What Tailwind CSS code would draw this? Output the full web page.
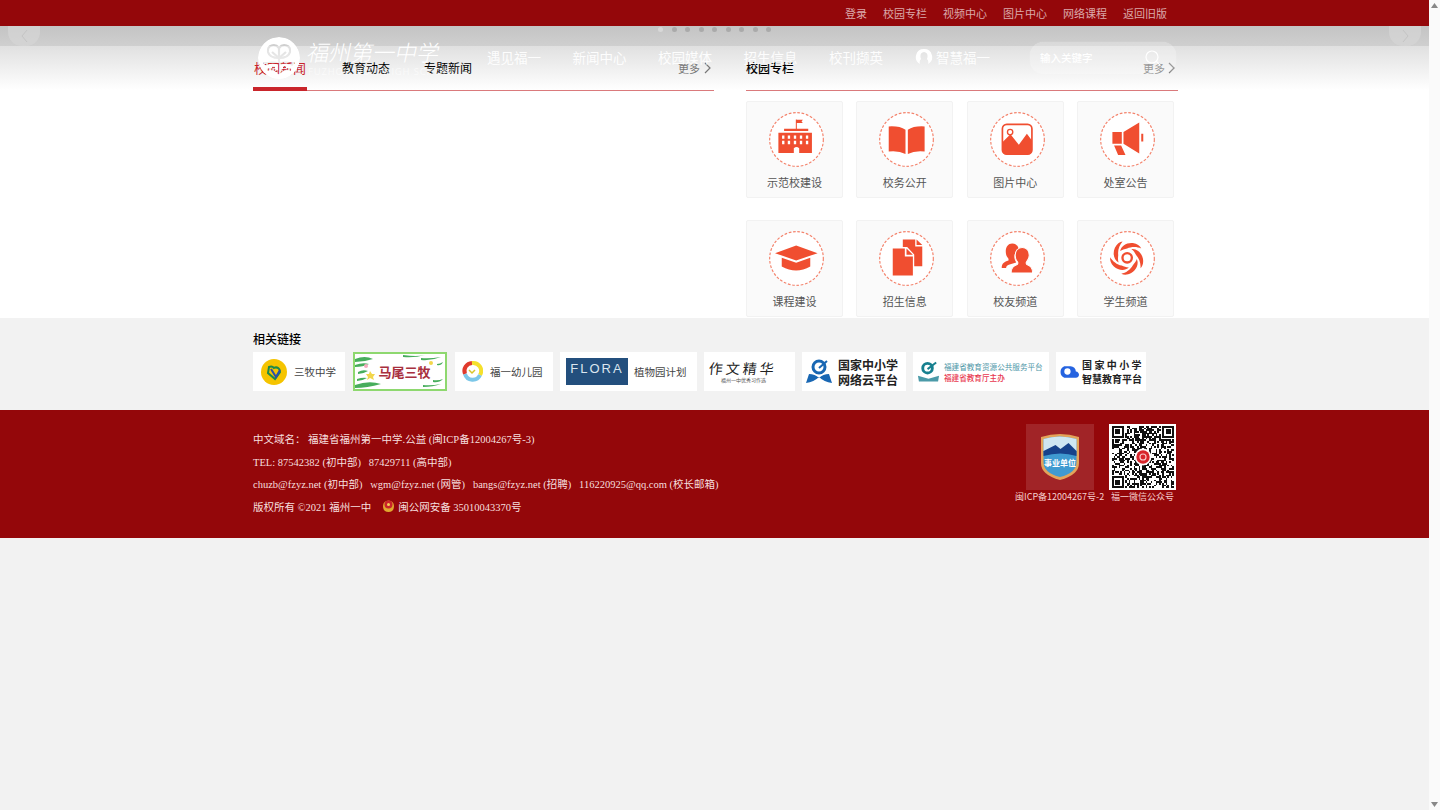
<!DOCTYPE html>
<html lang="zh-CN">
<head>
<meta charset="utf-8">
<title>福州第一中学</title>
<script src="https://cdn.jsdelivr.net/npm/@tailwindcss/browser@4"></script>
</head>
<body class="bg-[#f2f2f2] font-['Noto_Sans_CJK_SC','Liberation_Sans',sans-serif] overflow-hidden">
<div class="flex h-[810px] w-[1440px] overflow-hidden">
<div class="relative w-[1429px] shrink-0">

  <!-- top bar -->
  <div class="h-[26px] bg-[#94070a] flex items-center justify-end gap-[16px] pr-[262px] text-[11px] text-[#dba9aa]">
    <a>登录</a><a>校园专栏</a><a>视频中心</a><a>图片中心</a><a>网络课程</a><a>返回旧版</a>
  </div>

  <!-- main -->
  <div class="h-[292px] bg-[linear-gradient(#c4c4c4_0,#cfcfcf_20px,#e0e0e0_20px,#ffffff_64px)] flex pl-[253px]">
    <div class="w-[461px] h-[65px] flex border-b border-[#da7a7c]">
      <a class="w-[54px] h-[65px] pt-[33px] text-[13px] leading-[18px] text-[#c9252b] border-b-[4px] border-[#c9252b] text-center">校园新闻</a>
      <a class="ml-[35px] pt-[33px] text-[12px] leading-[18px] text-black">教育动态</a>
      <a class="ml-[34px] pt-[33px] text-[12px] leading-[18px] text-black">专题新闻</a>
      <a class="ml-auto mr-[3px] pt-[33px] text-[11px] leading-[18px] text-[#777] flex items-start gap-[4px]">更多
        <svg class="mt-[3px]" width="7" height="12" viewBox="0 0 7 12" fill="none" stroke="#777" stroke-width="1.2"><path d="M1 1l5 5-5 5"/></svg>
      </a>
    </div>
    <div class="ml-[32px] w-[432px]">
      <div class="h-[65px] flex border-b border-[#da7a7c]">
        <a class="pt-[33px] text-[12px] leading-[18px] font-medium text-black">校园专栏</a>
        <a class="ml-auto mr-[3px] pt-[33px] text-[11px] leading-[18px] text-[#777] flex items-start gap-[3px]">更多
          <svg class="mt-[3px]" width="7" height="12" viewBox="0 0 7 12" fill="none" stroke="#777" stroke-width="1.2"><path d="M1 1l5 5-5 5"/></svg>
        </a>
      </div>
      <div class="mt-[10px] grid grid-cols-[97px_97px_97px_97px] gap-x-[13.33px] gap-y-[22px]">
        <!-- card 1 -->
        <a class="h-[97px] bg-[#fafafa] border border-[#f2f2f2] rounded-[2px] flex flex-col items-center">
          <svg class="mt-[10px] ml-[4px] shrink-0" width="55" height="55" viewBox="0 0 164 164">
            <circle cx="82" cy="82" r="80" fill="#fff" stroke="#f4836c" stroke-width="3.5" stroke-dasharray="8 5"/>
            <path fill="#f04e30" d="M80 22h3v1h18l-4 5 4 5H83v17h34v7H45v-7h35zM28 62h100v60H90V108q-8-8-16 0v14H28z"/>
            <path fill="#fff" d="M39 70h7v10h-7zM56 70h7v10h-7zM74 70h7v10h-7zM92 70h7v10h-7zM110 70h7v10h-7zM39 86h7v10h-7zM56 86h7v10h-7zM74 86h7v10h-7zM92 86h7v10h-7zM110 86h7v10h-7z"/>
          </svg>
          <span class="mt-[7px] text-[11px] leading-[16px] text-[#555]">示范校建设</span>
        </a>
        <!-- card 2 -->
        <a class="h-[97px] bg-[#fafafa] border border-[#f2f2f2] rounded-[2px] flex flex-col items-center">
          <svg class="mt-[10px] ml-[4px] shrink-0" width="55" height="55" viewBox="0 0 164 164">
            <circle cx="82" cy="82" r="80" fill="#fff" stroke="#f4836c" stroke-width="3.5" stroke-dasharray="8 5"/>
            <path fill="#f04e30" d="M29 43q32-2 50 10v72q-20-10-50-7zM136 43q-32-2-50 10v72q20-10 50-7z"/>
          </svg>
          <span class="mt-[7px] text-[11px] leading-[16px] text-[#555]">校务公开</span>
        </a>
        <!-- card 3 -->
        <a class="h-[97px] bg-[#fafafa] border border-[#f2f2f2] rounded-[2px] flex flex-col items-center">
          <svg class="mt-[10px] ml-[4px] shrink-0" width="55" height="55" viewBox="0 0 164 164">
            <circle cx="82" cy="82" r="80" fill="#fff" stroke="#f4836c" stroke-width="3.5" stroke-dasharray="8 5"/>
            <rect x="37" y="37" width="88" height="89" rx="13" fill="#fff" stroke="#f04e30" stroke-width="5"/>
            <path fill="#f04e30" d="M37 90l24-24 25 32 24-33 15 20v30q0 11-11 11H48q-11 0-11-11z"/>
            <circle cx="60" cy="60" r="8" fill="none" stroke="#f04e30" stroke-width="4"/>
          </svg>
          <span class="mt-[7px] text-[11px] leading-[16px] text-[#555]">图片中心</span>
        </a>
        <!-- card 4 -->
        <a class="h-[97px] bg-[#fafafa] border border-[#f2f2f2] rounded-[2px] flex flex-col items-center">
          <svg class="mt-[10px] ml-[4px] shrink-0" width="55" height="55" viewBox="0 0 164 164">
            <circle cx="82" cy="82" r="80" fill="#fff" stroke="#f4836c" stroke-width="3.5" stroke-dasharray="8 5"/>
            <path fill="#f04e30" d="M37 60h28v35H37zM70 60l47-29v93L70 95zM123 65h6v23h-6zM42 100h21l13 28H54z"/>
          </svg>
          <span class="mt-[7px] text-[11px] leading-[16px] text-[#555]">处室公告</span>
        </a>
        <!-- card 5 -->
        <a class="h-[97px] bg-[#fafafa] border border-[#f2f2f2] rounded-[2px] flex flex-col items-center">
          <svg class="mt-[10px] ml-[4px] shrink-0" width="55" height="55" viewBox="0 0 164 164">
            <circle cx="82" cy="82" r="80" fill="#fff" stroke="#f4836c" stroke-width="3.5" stroke-dasharray="8 5"/>
            <path fill="#f04e30" d="M18 66l63-23 64 23-64 22zM38 80l43 15 42-15v26q-42 24-85 0z"/>
          </svg>
          <span class="mt-[7px] text-[11px] leading-[16px] text-[#555]">课程建设</span>
        </a>
        <!-- card 6 -->
        <a class="h-[97px] bg-[#fafafa] border border-[#f2f2f2] rounded-[2px] flex flex-col items-center">
          <svg class="mt-[10px] ml-[4px] shrink-0" width="55" height="55" viewBox="0 0 164 164">
            <circle cx="82" cy="82" r="80" fill="#fff" stroke="#f4836c" stroke-width="3.5" stroke-dasharray="8 5"/>
            <path fill="#f04e30" d="M71 25h37v21h21v59h-24V70L84 48H71zM112 25l17 17h-17z"/>
            <path fill="#f04e30" d="M41 52h36v24h24v57H41zM82 52l19 19H82z"/>
          </svg>
          <span class="mt-[7px] text-[11px] leading-[16px] text-[#555]">招生信息</span>
        </a>
        <!-- card 7 -->
        <a class="h-[97px] bg-[#fafafa] border border-[#f2f2f2] rounded-[2px] flex flex-col items-center">
          <svg class="mt-[10px] ml-[4px] shrink-0" width="55" height="55" viewBox="0 0 164 164">
            <circle cx="82" cy="82" r="80" fill="#fff" stroke="#f4836c" stroke-width="3.5" stroke-dasharray="8 5"/>
            <path fill="#f04e30" d="M66 37c14 0 20 11 19 20-8 4-14 13-12 24 1 7 5 10 5 13-12 4-30 6-30 16H35c0-14 8-18 20-22 1-3 0-6-2-8-5-6-6-12-6-20 0-13 8-23 19-23z"/>
            <path fill="#f04e30" stroke="#fff" stroke-width="3" d="M96 49c14 0 21 11 21 23 0 9-3 14-8 20-2 3-1 6 1 8 10 4 17 8 17 25H63c0-17 8-21 18-25 2-2 3-5 1-8-5-6-7-11-7-20 0-12 8-23 21-23z"/>
          </svg>
          <span class="mt-[7px] text-[11px] leading-[16px] text-[#555]">校友频道</span>
        </a>
        <!-- card 8 -->
        <a class="h-[97px] bg-[#fafafa] border border-[#f2f2f2] rounded-[2px] flex flex-col items-center">
          <svg class="mt-[10px] ml-[4px] shrink-0" width="55" height="55" viewBox="0 0 164 164">
            <circle cx="82" cy="82" r="80" fill="#fff" stroke="#f4836c" stroke-width="3.5" stroke-dasharray="8 5"/>
            <circle cx="81" cy="80" r="14" fill="none" stroke="#f04e30" stroke-width="7"/>
            <g fill="#f04e30">
              <path d="M60 60c3-16 20-26 38-24 13 2 21 8 25 16-12-6-30-6-42 0-8 2-15 3-21 8z"/>
              <path transform="rotate(72 81 80)" d="M60 60c3-16 20-26 38-24 13 2 21 8 25 16-12-6-30-6-42 0-8 2-15 3-21 8z"/>
              <path transform="rotate(144 81 80)" d="M60 60c3-16 20-26 38-24 13 2 21 8 25 16-12-6-30-6-42 0-8 2-15 3-21 8z"/>
              <path transform="rotate(216 81 80)" d="M60 60c3-16 20-26 38-24 13 2 21 8 25 16-12-6-30-6-42 0-8 2-15 3-21 8z"/>
              <path transform="rotate(288 81 80)" d="M60 60c3-16 20-26 38-24 13 2 21 8 25 16-12-6-30-6-42 0-8 2-15 3-21 8z"/>
            </g>
          </svg>
          <span class="mt-[7px] text-[11px] leading-[16px] text-[#555]">学生频道</span>
        </a>
      </div>
    </div>
  </div>

  <!-- related links -->
  <div class="h-[92px] pl-[253px] pt-[12px]">
    <div class="text-[12px] leading-[18px] font-medium text-black">相关链接</div>
    <div class="mt-[4px] flex h-[39px]">
      <a class="w-[92px] bg-white flex items-center pl-[8px] gap-[7px] text-[10.5px] text-[#444]">
        <svg width="26" height="26" viewBox="0 0 26 26"><circle cx="13" cy="13" r="13" fill="#f5c400"/><path d="M8 8a4 4 0 0 1 5 1 4 4 0 0 1 6 4l-5 7-7-6z" fill="none" stroke="#1a8a4a" stroke-width="2"/><path d="M10 10l5 8 4-7" fill="none" stroke="#2b4fa8" stroke-width="2"/></svg>
        三牧中学
      </a>
      <a class="ml-[8px] w-[94px] bg-white border-2 border-[#8ed86f] flex items-center justify-center pl-[9px] text-[13px] font-bold text-[#a8303e] relative overflow-hidden">
        马尾三牧
        <svg class="absolute left-0 top-0" width="90" height="35" viewBox="0 0 90 35"><path d="M0 5q10-4 18 0-9 3-18 3zM0 11q8-3 14-1-6 3-14 3zM3 18q5-3 10-1-5 3-10 3zM0 31q14-5 26-1-14 4-26 4zM2 25q6-2 10-1-5 3-10 3zM48 1q14 2 22 0-10 3-22 2zM66 4q8 1 20-1-10 4-20 3zM78 26q5 1 10-1-4 4-10 3zM68 31q8 1 18-1-8 3-18 3zM82 10q3 0 6-2-2 4-6 3z" fill="#47ad5c"/><circle cx="11" cy="12" r="2" fill="#f4a9c0"/><circle cx="76" cy="9" r="2" fill="#f2d64b"/><path d="M15 17l2 3h3l-2 3 1 3-4-2-3 2 1-3-2-3h3z" fill="#f2d64b"/></svg>
      </a>
      <a class="ml-[8px] w-[98px] bg-white flex items-center pl-[6px] gap-[7px] text-[10.5px] text-[#444]">
        <svg width="22" height="24" viewBox="0 0 22 24" fill="none" stroke-width="4"><path d="M4 14A8 8 0 0 1 11 3" stroke="#e03a2c"/><path d="M11 3a8 8 0 0 1 8 12" stroke="#f5e02c"/><path d="M19 15a8 8 0 0 1-15-1" stroke="#7cc7e8"/><path d="M8 10l3 3 3-3" stroke="#d9c52a" stroke-width="1.5"/></svg>
        福一幼儿园
      </a>
      <a class="ml-[7px] w-[137px] bg-white flex items-center pl-[6px] gap-[6px] text-[10.5px] text-[#444]">
        <span class="w-[62px] h-[27px] bg-[#234f7d] text-[#dbe6ef] text-[13px] leading-[21px] tracking-[2px] text-center font-['Liberation_Sans',sans-serif]">FLORA</span>
        植物园计划
      </a>
      <a class="ml-[7px] w-[91px] bg-white flex flex-col items-start justify-center text-[14px] leading-[16px] tracking-[3px] text-[#222] pl-[5px] relative">
        <span class="-skew-x-6 whitespace-nowrap">作文精华</span>
        <span class="ml-[12px] text-[5px] leading-[8px] tracking-normal text-[#555] whitespace-nowrap">福州一中优秀习作选</span>
      </a>
      <a class="ml-[7px] w-[104px] bg-white flex items-center pl-[3px] gap-[5px]">
        <svg class="shrink-0" width="28" height="26" viewBox="0 0 28 26"><path d="M1 24q8-1 13-6 5 5 13 6l-3-9q-6 0-10 4-4-4-10-4z" fill="#1967b3"/><circle cx="14" cy="8" r="6" fill="none" stroke="#1967b3" stroke-width="3"/><path d="M14 9l8-7" stroke="#1967b3" stroke-width="2"/></svg>
        <span class="text-[12px] leading-[15px] font-bold whitespace-nowrap text-[#222]">国家中小学<br>网络云平台</span>
      </a>
      <a class="ml-[7px] w-[136px] bg-white flex items-center pl-[4px] gap-[4px]">
        <svg class="shrink-0" width="23" height="26" viewBox="0 0 24 24"><circle cx="11" cy="8" r="5" fill="none" stroke="#17808f" stroke-width="3"/><path d="M11 9l9-7" stroke="#17808f" stroke-width="2"/><path d="M1 16l11 3 11-3-1 6H2z" fill="#4b9aa8"/></svg>
        <span class="text-[7.6px] leading-[11px] whitespace-nowrap text-[#4f97a8]">福建省教育资源公共服务平台<br><span class="text-[#e8384f] font-medium">福建省教育厅主办</span></span>
      </a>
      <a class="ml-[7px] w-[90px] bg-white flex items-center pl-[2px] gap-[3px]">
        <svg class="shrink-0" width="21" height="15" viewBox="0 0 20 14"><path d="M6 2h6a5 5 0 0 1 5 5c2 0 3 2 3 3s-1 3-3 3H6A6 6 0 0 1 6 2z" fill="#2563e0"/><circle cx="9" cy="7" r="3" fill="#fff"/></svg>
        <span class="text-[10px] leading-[14px] font-bold whitespace-nowrap text-[#222]"><span class="tracking-[2.4px]">国家中小学</span><br>智慧教育平台</span>
      </a>
    </div>
  </div>

  <!-- footer -->
  <div class="h-[128px] bg-[#94070a] pl-[253px] pr-[253px] flex justify-between text-[#f6dfdf]">
    <div class="pt-[19px] text-[10.5px] leading-[22.5px] font-['Liberation_Serif','Noto_Sans_CJK_SC',serif] whitespace-nowrap">
      <div>中文域名：&nbsp;福建省福州第一中学.公益 (闽ICP备12004267号-3)</div>
      <div>TEL: 87542382 (初中部)&nbsp;&nbsp; 87429711 (高中部)</div>
      <div>chuzb@fzyz.net (初中部)&nbsp;&nbsp; wgm@fzyz.net (网管)&nbsp;&nbsp; bangs@fzyz.net (招聘)&nbsp;&nbsp; 116220925@qq.com (校长邮箱)</div>
      <div class="flex items-center">版权所有 ©2021 福州一中
        <svg class="ml-[11px] mr-[3px] -mt-[5px]" width="13" height="13" viewBox="0 0 13 13"><path d="M1 7a5.500 5.500 0 1 1 11 0q0 6-5.500 6T1 7z" fill="#e0a82e"/><circle cx="6.500" cy="5.500" r="4" fill="#c9232b"/><circle cx="6.500" cy="5.500" r="1.500" fill="#f2cf55"/></svg>
        闽公网安备 35010043370号
      </div>
    </div>
    <div class="pt-[14px] flex gap-[15px] relative">
      <div class="w-[68px] h-[66px] bg-[#a12427] flex items-center justify-center">
        <svg width="40" height="48" viewBox="0 0 40 48">
          <path d="M1 4q19-6 38 0v26q0 12-19 17Q1 42 1 30z" fill="#e3a45a"/>
          <path d="M3.500 6q16-5 33 0v23q0 11-16.500 15Q3.500 40 3.500 29z" fill="#3f9ad0"/>
          <path d="M3.500 6q16-5 33 0v12H3.500z" fill="#cfe6f2"/>
          <path d="M3.500 18l12-6 5 4 8-6 8 8v5q-16-5-33 0z" fill="#17428a"/>
          <text x="20" y="33" text-anchor="middle" fill="#fff" font-size="8" font-weight="700" font-family="Noto Sans CJK SC">事业单位</text>
        </svg>
      </div>
      <div class="w-[67px] h-[66px] bg-white flex items-center justify-center">
        <svg width="62" height="62" viewBox="0 0 37 37" shape-rendering="crispEdges">
          <g id="mods" fill="#111"></g>
          <g fill="#fff"><rect x="0" y="0" width="8" height="8"/><rect x="29" y="0" width="8" height="8"/><rect x="0" y="29" width="8" height="8"/></g>
          <g fill="none" stroke="#111"><rect x=".5" y=".5" width="6" height="6"/><rect x="30.500" y=".5" width="6" height="6"/><rect x=".5" y="30.500" width="6" height="6"/></g>
          <g fill="#111"><rect x="2" y="2" width="3" height="3"/><rect x="32" y="2" width="3" height="3"/><rect x="2" y="32" width="3" height="3"/></g>
          <circle cx="18.500" cy="18.500" r="5" fill="#fff" shape-rendering="auto"/>
          <circle cx="18.500" cy="18.500" r="4" fill="#d8262c" shape-rendering="auto"/>
          <circle cx="18.500" cy="18.500" r="1.800" fill="none" stroke="#f8c9c9" stroke-width=".7" shape-rendering="auto"/>
        </svg>
      </div>
      <div class="absolute left-[-11px] top-[80px] text-[9px] leading-[14px] text-[#f6cfcf] whitespace-nowrap">闽ICP备12004267号-2</div>
      <div class="absolute right-[2px] top-[80px] text-[9px] leading-[14px] text-[#f6cfcf] whitespace-nowrap">福一微信公众号</div>
    </div>
  </div>

  <!-- slider controls overlaying the page -->
  <div class="absolute left-[8px] top-[26px] w-[32px] h-[20px] rounded-b-[14px] bg-[#d6d6d6]/70 flex items-center justify-center">
    <svg width="7" height="14" viewBox="0 0 7 14" fill="none" stroke="#c4c4c4" stroke-width="1"><path d="M6 1L1 7l5 6"/></svg>
  </div>
  <div class="absolute left-[1389px] top-[26px] w-[32px] h-[20px] rounded-b-[14px] bg-[#d6d6d6]/70 flex items-center justify-center">
    <svg width="7" height="14" viewBox="0 0 7 14" fill="none" stroke="#c4c4c4" stroke-width="1"><path d="M1 1l5 6-5 6"/></svg>
  </div>
  <div class="absolute left-[658px] top-[27px] flex gap-[8.500px]">
    <span class="w-[5px] h-[5px] rounded-full bg-[#d8d8d8]"></span>
    <span class="w-[5px] h-[5px] rounded-full bg-[#aaaaaa]"></span>
    <span class="w-[5px] h-[5px] rounded-full bg-[#aaaaaa]"></span>
    <span class="w-[5px] h-[5px] rounded-full bg-[#aaaaaa]"></span>
    <span class="w-[5px] h-[5px] rounded-full bg-[#aaaaaa]"></span>
    <span class="w-[5px] h-[5px] rounded-full bg-[#aaaaaa]"></span>
    <span class="w-[5px] h-[5px] rounded-full bg-[#aaaaaa]"></span>
    <span class="w-[5px] h-[5px] rounded-full bg-[#aaaaaa]"></span>
    <span class="w-[5px] h-[5px] rounded-full bg-[#aaaaaa]"></span>
  </div>

  <!-- floating nav over the banner -->
  <div class="absolute left-[258px] top-[37px] h-[42px] w-[920px] flex items-start text-white">
    <svg class="shrink-0" width="42" height="42" viewBox="0 0 42 42">
      <mask id="knot">
        <circle cx="21" cy="21" r="21" fill="#fff"/>
        <g fill="none" stroke="#000" stroke-width="2.200">
          <path d="M21 11c-4-5-12-3-11 4 1 4 5 6 11 6 6 0 10-2 11-6 1-7-7-9-11-4z"/>
          <path d="M21 11v25M14 15l7 6 7-6"/>
          <path d="M7 28q6-4 14-1 8-3 14 1M9 33q6-3 12 3 6-6 12-3"/>
          <path d="M5 26h6M31 26h6M14 30h3M25 30h3"/>
        </g>
      </mask>
      <circle cx="21" cy="21" r="21" fill="#fff" mask="url(#knot)"/>
    </svg>
    <div class="ml-[8px] w-[140px] shrink-0 pt-[1px]">
      <div class="text-[22px] leading-[27px] font-light whitespace-nowrap -skew-x-12">福州第一中学</div>
      <div class="text-[9.5px] leading-[12px] mt-[1px] tracking-[0.8px] whitespace-nowrap text-white/60 font-['Open_Sans',sans-serif]">FUZHOU NO.1 HIGH SCHOOL</div>
    </div>
    <div class="ml-[39px] mt-[8px] w-[504px] shrink-0 flex text-[13.500px] leading-[24px] text-white/95">
      <a class="w-[85.500px]">遇见福一</a>
      <a class="w-[85.500px]">新闻中心</a>
      <a class="w-[85.500px]">校园媒体</a>
      <a class="w-[85.500px]">招生信息</a>
      <a class="w-[86px]">校刊撷英</a>
      <a class="flex items-center gap-[3px] whitespace-nowrap">
        <svg width="18" height="18" viewBox="0 0 18 18" fill="#fff"><path d="M9 1a8 8 0 0 0-4 15q-1-3 1-5-2-6 3-7 5 1 3 7 2 2 1 5A8 8 0 0 0 9 1z"/></svg>
        智慧福一</a>
    </div>
    <div class="ml-[39px] mt-[5px] w-[146px] h-[32px] rounded-[14px] bg-white/25 shadow-[0_0_1px_rgba(255,255,255,0.6)] flex items-center pl-[10px] text-[10.5px] font-medium shrink-0">
      输入关键字
      <svg class="ml-auto mr-[15px]" width="16" height="16" viewBox="0 0 16 16" fill="none" stroke="#fff" stroke-width="1.200"><circle cx="7" cy="7" r="6"/><path d="M11.500 11.500L15 15"/></svg>
    </div>
  </div>
</div>

<!-- scrollbar -->
<div class="w-[11px] h-[810px] bg-[#fafafa] flex flex-col justify-between items-center py-[3px]">
  <svg width="7" height="5" viewBox="0 0 7 5"><path d="M3.500 0L7 5H0z" fill="#888"/></svg>
  <svg width="7" height="5" viewBox="0 0 7 5"><path d="M0 0h7L3.500 5z" fill="#888"/></svg>
</div>
</div>
<script>
var g=document.getElementById('mods'),s=7,h='';
for(var y=0;y<37;y++)for(var x=0;x<37;x++){s=(s*1103515245+12345)%2147483648;if((s>>12)%100<50)h+='<rect x="'+x+'" y="'+y+'" width="1" height="1"/>';}
g.innerHTML=h;
</script>
</body>
</html>
